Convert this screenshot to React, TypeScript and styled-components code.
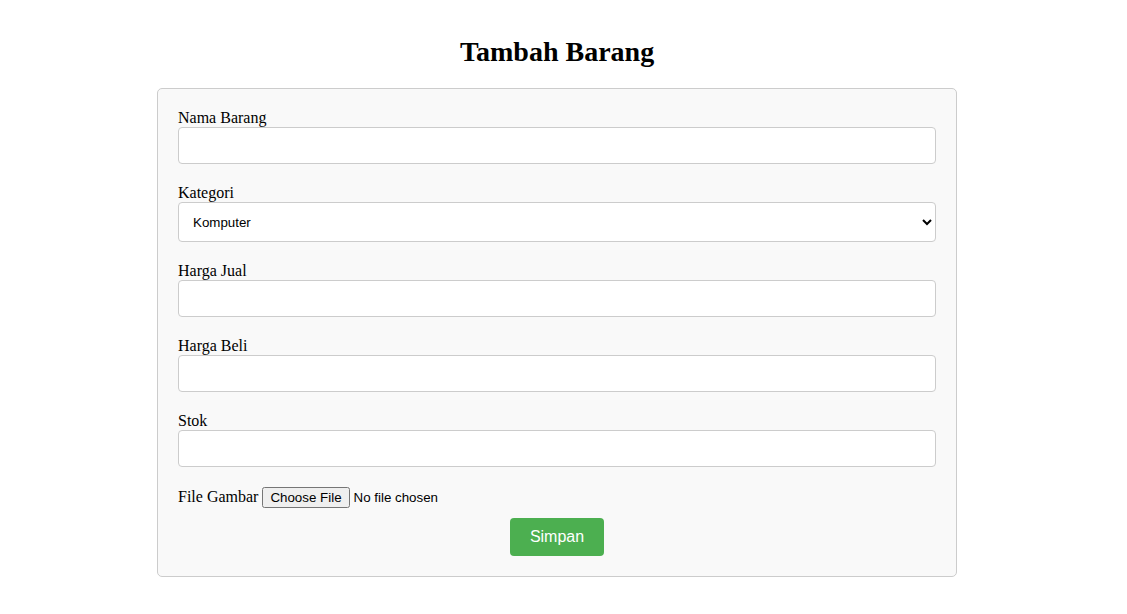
import React from "react";
import styled, { createGlobalStyle } from "styled-components";

const GlobalStyle = createGlobalStyle`
  html, body { background: #ffffff; }
  body {
    margin: 8px;
    font-family: "Liberation Serif", "Times New Roman", serif;
    font-size: 16px;
    color: #000;
  }
`;

const Page = styled.div`
  width: 1098px;
`;

const Title = styled.h2`
  margin: 28px 0 20px;
  font-size: 28px;
  line-height: 32px;
  font-weight: bold;
  text-align: center;
`;

const Form = styled.form`
  box-sizing: border-box;
  width: 800px;
  margin: 0 auto;
  padding: 20px;
  background: #f9f9f9;
  border: 1px solid #ccc;
  border-radius: 5px;
`;

const Label = styled.label`
  display: block;
`;

const Field = styled.input`
  display: block;
  box-sizing: border-box;
  width: 100%;
  padding: 10px;
  margin: 0 0 20px;
  border: 1px solid #ccc;
  border-radius: 4px;
  font-family: Arial, "Liberation Sans", sans-serif;
  font-size: 13.333px;
  background: #fff;
`;

const Select = styled.select`
  display: block;
  box-sizing: border-box;
  width: 100%;
  height: 40px;
  padding: 10px;
  margin: 0 0 20px;
  border: 1px solid #ccc;
  border-radius: 4px;
  font-family: Arial, "Liberation Sans", sans-serif;
  font-size: 13.333px;
  color: #000;
  background: #fff;
`;

const FileRow = styled.div`
  line-height: 20px;
`;

const InlineLabel = styled.label`
  display: inline;
`;

const FileInput = styled.input`
  font-family: Arial, "Liberation Sans", sans-serif;
  font-size: 13.333px;
`;

const Actions = styled.div`
  margin-top: 10px;
  text-align: center;
`;

const SaveButton = styled.button`
  padding: 10px 20px;
  border: none;
  border-radius: 4px;
  background: #4caf50;
  color: #fff;
  font-family: Arial, "Liberation Sans", sans-serif;
  font-size: 16px;
  line-height: 18px;
  cursor: pointer;
`;

export default function App() {
  return (
    <Page>
      <GlobalStyle />
      <Title>Tambah Barang</Title>
      <Form onSubmit={(e) => e.preventDefault()}>
        <Label htmlFor="nama">Nama Barang</Label>
        <Field id="nama" type="text" />
        <Label htmlFor="kategori">Kategori</Label>
        <Select id="kategori" defaultValue="Komputer">
          <option>Komputer</option>
          <option>Elektronik</option>
          <option>Aksesoris</option>
        </Select>
        <Label htmlFor="jual">Harga Jual</Label>
        <Field id="jual" type="text" />
        <Label htmlFor="beli">Harga Beli</Label>
        <Field id="beli" type="text" />
        <Label htmlFor="stok">Stok</Label>
        <Field id="stok" type="text" />
        <FileRow>
          <InlineLabel htmlFor="gambar">File Gambar</InlineLabel>{" "}
          <FileInput id="gambar" type="file" />
        </FileRow>
        <Actions>
          <SaveButton type="submit">Simpan</SaveButton>
        </Actions>
      </Form>
    </Page>
  );
}
